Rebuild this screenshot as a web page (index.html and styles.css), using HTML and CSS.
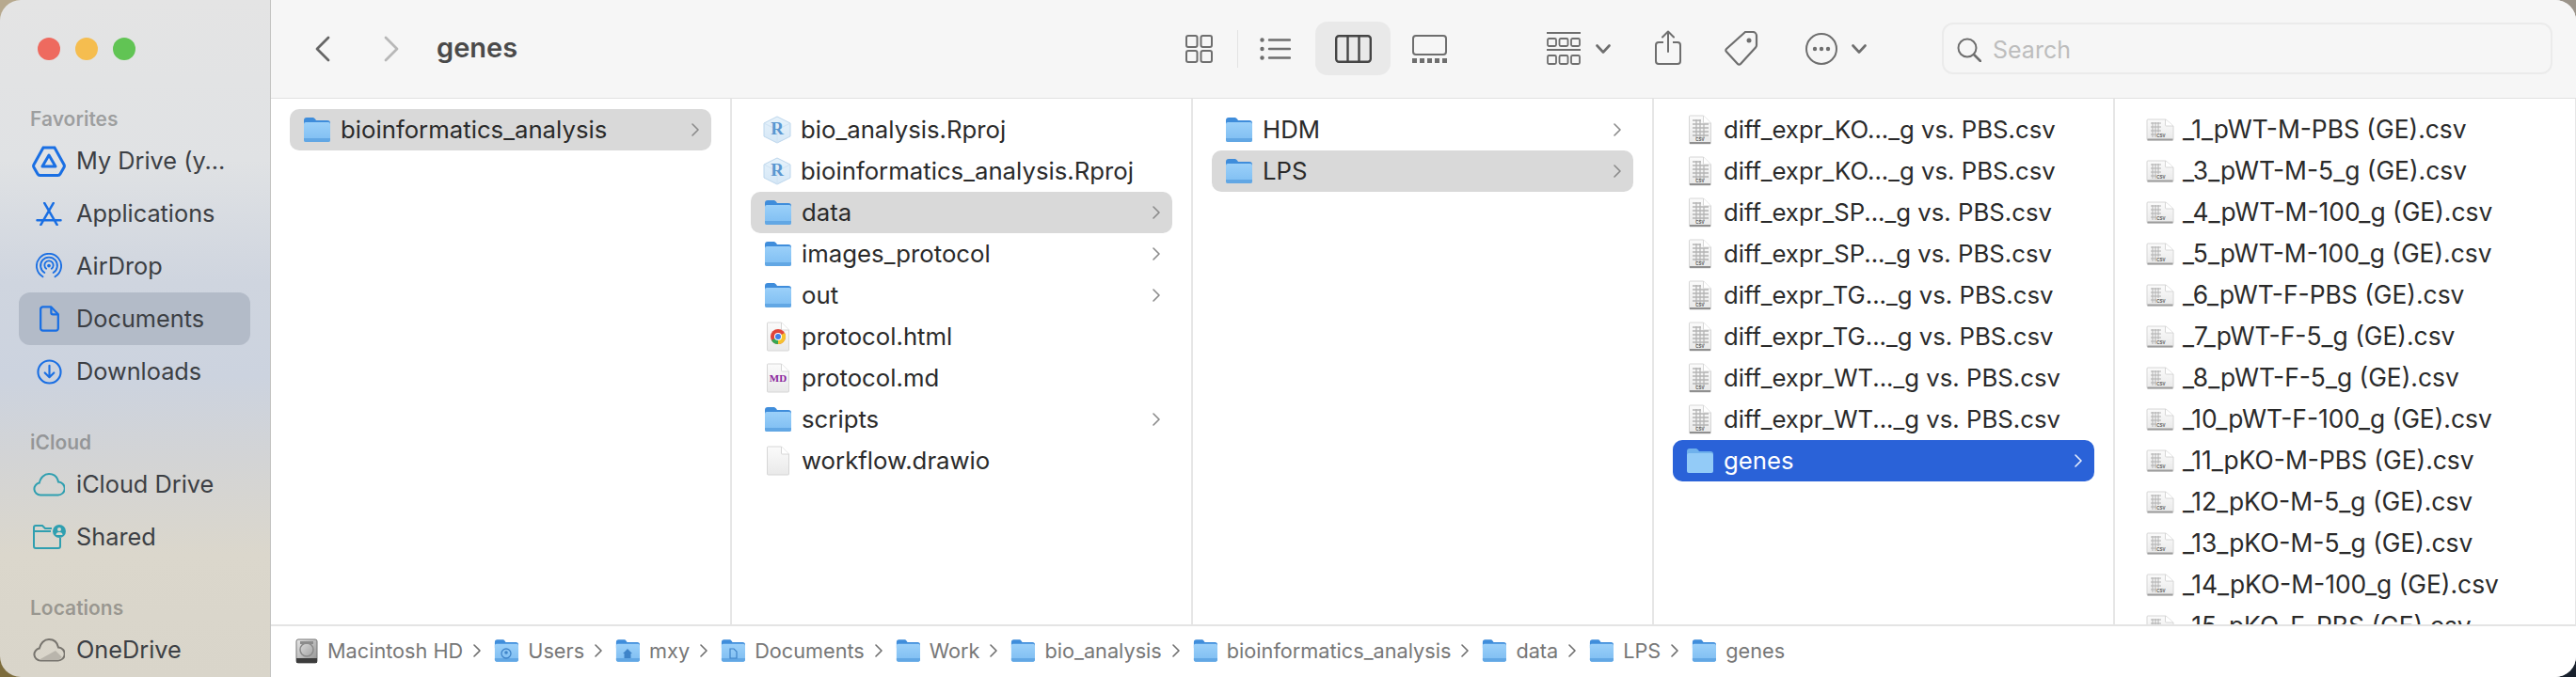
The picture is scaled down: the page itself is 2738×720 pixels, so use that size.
FILE: index.html
```html
<!DOCTYPE html>
<html lang="en">
<head>
<meta charset="utf-8">
<title>genes</title>
<link rel="stylesheet" href="styles.css">
</head>
<body>
<svg class="defs" width="0" height="0" aria-hidden="true">
  <defs>
    <linearGradient id="fg" x1="0" y1="0" x2="0" y2="1"><stop offset="0" stop-color="#9bd0f9"/><stop offset="1" stop-color="#7dbdf2"/></linearGradient>
    <linearGradient id="pg" x1="0" y1="0" x2="0" y2="1"><stop offset="0" stop-color="#fbfbfb"/><stop offset="1" stop-color="#e9e9e9"/></linearGradient>
    <linearGradient id="hd" x1="0" y1="0" x2="1" y2="1"><stop offset="0" stop-color="#e8e8e8"/><stop offset="1" stop-color="#8f8f8f"/></linearGradient>
    <linearGradient id="cube" x1="0" y1="0" x2="0" y2="1"><stop offset="0" stop-color="#e6f2fb"/><stop offset="1" stop-color="#d5e7f6"/></linearGradient>
    <symbol id="folder" viewBox="0 0 29 28">
      <path d="M1 4a3 3 0 0 1 3-3h6c1.5 0 2.2.6 3 1.5L14 4h12a3 3 0 0 1 3 3v4H1z" fill="#3f8ddb"/>
      <rect x="1" y="6" width="28" height="21" rx="2" fill="url(#fg)"/>
      <path d="M1 23h28v2a2 2 0 0 1-2 2H3a2 2 0 0 1-2-2z" fill="#62a7e4"/>
    </symbol>
    <symbol id="folder-sel" viewBox="0 0 29 28">
      <path d="M1 4a3 3 0 0 1 3-3h6c1.5 0 2.2.6 3 1.5L14 4h12a3 3 0 0 1 3 3v4H1z" fill="#6fb1ec"/>
      <rect x="1" y="6" width="28" height="21" rx="2" fill="#93cbf7"/>
    </symbol>
    <symbol id="page" viewBox="0 0 26 32">
      <path d="M1.500 2a1 1 0 0 1 1-1h14l8 8v21a1 1 0 0 1-1 1h-21a1 1 0 0 1-1-1z" fill="url(#pg)" stroke="#d6d6d6"/>
      <path d="M16.500 1v7a1 1 0 0 0 1 1h7" fill="#fff" stroke="#d6d6d6"/>
    </symbol>
    <symbol id="csv" viewBox="0 0 26 32">
      <use href="#page"/>
      <path d="M5 6h9M5 10h17M5 14h17M5 18h17M5 22h17M9 5v20M13 5v20M17 10v15" stroke="#b4b4b4" stroke-width="1.300" fill="none"/>
      <rect x="2" y="29" width="22" height="2" fill="#8f8f8f"/>
      <text x="13" y="28" class="csv-label" text-anchor="middle">CSV</text>
    </symbol>
    <symbol id="csv-wide" viewBox="0 0 30 24" preserveAspectRatio="none">
      <path d="M1 2a1 1 0 0 1 1-1h19l8 7v14a1 1 0 0 1-1 1H2a1 1 0 0 1-1-1z" fill="url(#pg)" stroke="#d6d6d6"/>
      <path d="M20.500 1v6a1 1 0 0 0 1 1h7.500" fill="#fff" stroke="#d6d6d6"/>
      <path d="M5 5h11M5 9h11M5 13h11M5 17h6M7 4v16M10 4v16M13 4v11" stroke="#b0b0b0" stroke-width="1" fill="none"/>
      <rect x="1.500" y="21.500" width="27" height="2" fill="#9c9c9c"/>
      <text x="16" y="19.500" class="csv-label" text-anchor="middle">CSV</text>
    </symbol>
    <symbol id="rproj" viewBox="0 0 30 30">
      <path d="M15 1l14 7v14l-14 7-14-7V8z" fill="url(#cube)" stroke="#bcd6ec"/>
      <path d="M1 8l14 7 14-7M15 15v14" fill="none" stroke="#cfe2f2"/>
      <text x="15" y="20" class="r-label" text-anchor="middle">R</text>
    </symbol>
    <symbol id="chevron" viewBox="0 0 8 14">
      <path d="M1 1l6 6-6 6" fill="none" stroke="currentColor" stroke-width="1.600" stroke-linecap="round" stroke-linejoin="round"/>
    </symbol>
  </defs>
</svg>

<div class="window">
  <aside class="sidebar">
    <div class="lights"><span class="light red"></span><span class="light amber"></span><span class="light green"></span></div>
    <div class="side-title">Favorites</div>
    <div class="side-item">
      <span class="side-icon"><svg class="blue" width="36" height="33" viewBox="0 0 36 33"><path d="M12 2h12l10 18a3 3 0 0 1 0 3l-4 7a3 3 0 0 1-2.500 1.500h-19A3 3 0 0 1 6 30l-4-7a3 3 0 0 1 0-3z" fill="none" stroke="currentColor" stroke-width="3"/><path d="M18 10l7 12H11z" fill="none" stroke="currentColor" stroke-width="3" stroke-linejoin="round"/></svg></span>
      <span class="side-label">My Drive (y...</span>
    </div>
    <div class="side-item">
      <span class="side-icon"><svg class="blue" width="28" height="25" viewBox="0 0 28 26"><path d="M9 1l14 24M19 1L5 25M1 20h26" fill="none" stroke="currentColor" stroke-width="2.600" stroke-linecap="round"/></svg></span>
      <span class="side-label">Applications</span>
    </div>
    <div class="side-item">
      <span class="side-icon"><svg class="blue" width="28" height="28" viewBox="0 0 30 30"><g fill="none" stroke="currentColor" stroke-width="2" stroke-linecap="round"><path d="M8 27a14 14 0 1 1 14 0"/><path d="M10 22.500a9.500 9.500 0 1 1 10 0"/><path d="M12 18a5 5 0 1 1 6 0"/></g><circle cx="15" cy="14.500" r="2" fill="currentColor"/></svg></span>
      <span class="side-label">AirDrop</span>
    </div>
    <div class="side-item active">
      <span class="side-icon"><svg class="blue" width="23" height="28" viewBox="0 0 24 30"><path d="M2 4a2.500 2.500 0 0 1 2.500-2.500H14L22 10v16a2.500 2.500 0 0 1-2.500 2.500h-15A2.500 2.500 0 0 1 2 26z" fill="none" stroke="currentColor" stroke-width="2.400" stroke-linejoin="round"/><path d="M14 2v6a2 2 0 0 0 2 2h6" fill="none" stroke="currentColor" stroke-width="2.400"/></svg></span>
      <span class="side-label">Documents</span>
    </div>
    <div class="side-item">
      <span class="side-icon"><svg class="blue" width="27" height="27" viewBox="0 0 28 28"><circle cx="14" cy="14" r="12.500" fill="none" stroke="currentColor" stroke-width="2.200"/><path d="M14 7v13M9 15l5 5 5-5" fill="none" stroke="currentColor" stroke-width="2.200" stroke-linecap="round" stroke-linejoin="round"/></svg></span>
      <span class="side-label">Downloads</span>
    </div>

    <div class="side-title side-gap">iCloud</div>
    <div class="side-item">
      <span class="side-icon"><svg class="teal" width="34" height="26" viewBox="0 0 34 26"><path d="M8 24.500a6.500 6.500 0 0 1-1.200-12.900C8 6 12 2 17 2c5.500 0 9 3.500 10 8.500a7 7 0 0 1-.5 14z" fill="none" stroke="currentColor" stroke-width="2"/></svg></span>
      <span class="side-label">iCloud Drive</span>
    </div>
    <div class="side-item">
      <span class="side-icon"><svg class="teal" width="36" height="28" viewBox="0 0 36 28"><path d="M2 7V4a2 2 0 0 1 2-2h7l3 3h7M2 8h18M2 7v17a2 2 0 0 0 2 2h24a2 2 0 0 0 2-2v-9" fill="none" stroke="currentColor" stroke-width="2"/><circle cx="29" cy="8" r="7" fill="currentColor"/><circle cx="29" cy="6" r="2" fill="#dcd8cd"/><path d="M25.500 12a3.500 3 0 0 1 7 0z" fill="#dcd8cd"/></svg></span>
      <span class="side-label">Shared</span>
    </div>

    <div class="side-title side-gap">Locations</div>
    <div class="side-item">
      <span class="side-icon"><svg class="gray" width="34" height="26" viewBox="0 0 34 26"><path d="M8 24.500a6.500 6.500 0 0 1-1.200-12.900C8 6 12 2 17 2c5.500 0 9 3.500 10 8.500a7 7 0 0 1-.5 14z" fill="none" stroke="currentColor" stroke-width="2"/><path d="M6 24l18-10 7 7-4 3z" fill="#b9b5ac"/></svg></span>
      <span class="side-label">OneDrive</span>
    </div>
  </aside>

  <div class="main">
    <header class="toolbar">
      <svg class="nav-back" width="16" height="28" viewBox="0 0 16 28"><path d="M14 2L2 14l12 12" fill="none" stroke="#666" stroke-width="2.800" stroke-linecap="round" stroke-linejoin="round"/></svg>
      <svg class="nav-fwd" width="16" height="28" viewBox="0 0 16 28"><path d="M2 2l12 12L2 26" fill="none" stroke="#b8b8b8" stroke-width="2.800" stroke-linecap="round" stroke-linejoin="round"/></svg>
      <div class="title">genes</div>

      <svg class="tool t-grid" width="29" height="30" viewBox="0 0 29 30"><g fill="none" stroke="#6e6e6e" stroke-width="2"><rect x="1" y="1" width="11.500" height="12" rx="2"/><rect x="16.500" y="1" width="11.500" height="12" rx="2"/><rect x="1" y="17" width="11.500" height="12" rx="2"/><rect x="16.500" y="17" width="11.500" height="12" rx="2"/></g></svg>
      <span class="tool-sep"></span>
      <svg class="tool t-list" width="33" height="24" viewBox="0 0 33 24"><g fill="#6e6e6e"><circle cx="2.500" cy="2.500" r="2.200"/><circle cx="2.500" cy="12" r="2.200"/><circle cx="2.500" cy="21.500" r="2.200"/></g><path d="M10 2.500h22M10 12h22M10 21.500h22" stroke="#6e6e6e" stroke-width="2.400" stroke-linecap="round"/></svg>
      <span class="view-active"><svg width="39" height="30" viewBox="0 0 39 30"><g fill="none" stroke="#454545" stroke-width="2.400"><rect x="1.200" y="1.200" width="36.600" height="27.600" rx="3"/><path d="M13.500 1v28M25.500 1v28"/></g></svg></span>
      <svg class="tool t-gallery" width="37" height="30" viewBox="0 0 37 30"><rect x="1" y="1" width="35" height="20" rx="3" fill="none" stroke="#6e6e6e" stroke-width="2"/><g fill="#6e6e6e"><rect x="0" y="25" width="5" height="5"/><rect x="8" y="25" width="5" height="5"/><rect x="16" y="25" width="5" height="5"/><rect x="24" y="25" width="5" height="5"/><rect x="32" y="25" width="5" height="5"/></g></svg>
      <svg class="tool t-group" width="36" height="35" viewBox="0 0 36 35"><path d="M0 1h36M0 19h36" stroke="#6e6e6e" stroke-width="2"/><g fill="none" stroke="#6e6e6e" stroke-width="1.800"><rect x="1" y="7" width="9" height="8" rx="1.500"/><rect x="13.500" y="7" width="9" height="8" rx="1.500"/><rect x="26" y="7" width="9" height="8" rx="1.500"/><rect x="1" y="25" width="9" height="9" rx="1.500"/><rect x="13.500" y="25" width="9" height="9" rx="1.500"/><rect x="26" y="25" width="9" height="9" rx="1.500"/></g></svg>
      <svg class="tool t-caret" width="16" height="10" viewBox="0 0 16 10"><path d="M1.500 1.500L8 8.500l6.500-7" fill="none" stroke="#6e6e6e" stroke-width="2.600" stroke-linecap="round" stroke-linejoin="round"/></svg>
      <svg class="tool t-share" width="28" height="37" viewBox="0 0 28 37"><path d="M9 13H4a3 3 0 0 0-3 3v17a3 3 0 0 0 3 3h20a3 3 0 0 0 3-3V16a3 3 0 0 0-3-3h-5" fill="none" stroke="#6e6e6e" stroke-width="2"/><path d="M14 23V2M8 7.500L14 1.500l6 6" fill="none" stroke="#6e6e6e" stroke-width="2" stroke-linecap="round" stroke-linejoin="round"/></svg>
      <svg class="tool t-tag" width="36" height="37" viewBox="0 0 36 37"><path d="M22 1h8a4 4 0 0 1 4 4v10a4 4 0 0 1-1 2.500L17 35a2 2 0 0 1-3 0L2 22a2 2 0 0 1 0-3z" fill="none" stroke="#6e6e6e" stroke-width="2.200" stroke-linejoin="round"/><circle cx="26" cy="10" r="2.500" fill="#6e6e6e"/></svg>
      <svg class="tool t-more" width="34" height="34" viewBox="0 0 34 34"><circle cx="17" cy="17" r="16" fill="none" stroke="#6e6e6e" stroke-width="2"/><g fill="#6e6e6e"><circle cx="10" cy="17" r="2.200"/><circle cx="17" cy="17" r="2.200"/><circle cx="24" cy="17" r="2.200"/></g></svg>
      <svg class="tool t-caret2" width="16" height="10" viewBox="0 0 16 10"><path d="M1.500 1.500L8 8.500l6.500-7" fill="none" stroke="#6e6e6e" stroke-width="2.600" stroke-linecap="round" stroke-linejoin="round"/></svg>

      <div class="search">
        <svg width="26" height="26" viewBox="0 0 26 26"><circle cx="11" cy="11" r="9.500" fill="none" stroke="#6e6e6e" stroke-width="2"/><path d="M18 18l7 7" stroke="#6e6e6e" stroke-width="2.600" stroke-linecap="round"/></svg>
        <span class="search-text">Search</span>
      </div>
    </header>

    <div class="columns">
      <section class="col">
        <div class="row selected"><svg class="icon-folder"><use href="#folder"/></svg><span class="name">bioinformatics_analysis</span><svg class="chev"><use href="#chevron"/></svg></div>
      </section>

      <section class="col">
        <div class="row"><svg class="icon-rproj"><use href="#rproj"/></svg><span class="name">bio_analysis.Rproj</span></div>
        <div class="row"><svg class="icon-rproj"><use href="#rproj"/></svg><span class="name">bioinformatics_analysis.Rproj</span></div>
        <div class="row selected"><svg class="icon-folder"><use href="#folder"/></svg><span class="name">data</span><svg class="chev"><use href="#chevron"/></svg></div>
        <div class="row"><svg class="icon-folder"><use href="#folder"/></svg><span class="name">images_protocol</span><svg class="chev"><use href="#chevron"/></svg></div>
        <div class="row"><svg class="icon-folder"><use href="#folder"/></svg><span class="name">out</span><svg class="chev"><use href="#chevron"/></svg></div>
        <div class="row"><svg class="icon-file" viewBox="0 0 26 32"><use href="#page"/><circle cx="13" cy="16" r="8" fill="#e0453a"/><path d="M13 16L6 20a8 8 0 0 0 7 4z" fill="#34a853"/><path d="M13 16v8a8 8 0 0 0 7-12z" fill="#f6c22e"/><circle cx="13" cy="16" r="4" fill="#fff"/><circle cx="13" cy="16" r="3" fill="#3f7fe8"/></svg><span class="name">protocol.html</span></div>
        <div class="row"><svg class="icon-file" viewBox="0 0 26 32"><use href="#page"/><text x="13" y="20" class="md-label" text-anchor="middle">MD</text></svg><span class="name">protocol.md</span></div>
        <div class="row"><svg class="icon-folder"><use href="#folder"/></svg><span class="name">scripts</span><svg class="chev"><use href="#chevron"/></svg></div>
        <div class="row"><svg class="icon-file"><use href="#page"/></svg><span class="name">workflow.drawio</span></div>
      </section>

      <section class="col">
        <div class="row"><svg class="icon-folder"><use href="#folder"/></svg><span class="name">HDM</span><svg class="chev"><use href="#chevron"/></svg></div>
        <div class="row selected"><svg class="icon-folder"><use href="#folder"/></svg><span class="name">LPS</span><svg class="chev"><use href="#chevron"/></svg></div>
      </section>

      <section class="col">
        <div class="row"><svg class="icon-file"><use href="#csv"/></svg><span class="name">diff_expr_KO..._g vs. PBS.csv</span></div>
        <div class="row"><svg class="icon-file"><use href="#csv"/></svg><span class="name">diff_expr_KO..._g vs. PBS.csv</span></div>
        <div class="row"><svg class="icon-file"><use href="#csv"/></svg><span class="name">diff_expr_SP..._g vs. PBS.csv</span></div>
        <div class="row"><svg class="icon-file"><use href="#csv"/></svg><span class="name">diff_expr_SP..._g vs. PBS.csv</span></div>
        <div class="row"><svg class="icon-file"><use href="#csv"/></svg><span class="name">diff_expr_TG..._g vs. PBS.csv</span></div>
        <div class="row"><svg class="icon-file"><use href="#csv"/></svg><span class="name">diff_expr_TG..._g vs. PBS.csv</span></div>
        <div class="row"><svg class="icon-file"><use href="#csv"/></svg><span class="name">diff_expr_WT..._g vs. PBS.csv</span></div>
        <div class="row"><svg class="icon-file"><use href="#csv"/></svg><span class="name">diff_expr_WT..._g vs. PBS.csv</span></div>
        <div class="row focused"><svg class="icon-folder"><use href="#folder-sel"/></svg><span class="name">genes</span><svg class="chev"><use href="#chevron"/></svg></div>
      </section>

      <section class="col col-last">
        <div class="row"><svg class="icon-wide"><use href="#csv-wide"/></svg><span class="name name-wide">_1_pWT-M-PBS (GE).csv</span></div>
        <div class="row"><svg class="icon-wide"><use href="#csv-wide"/></svg><span class="name name-wide">_3_pWT-M-5_g (GE).csv</span></div>
        <div class="row"><svg class="icon-wide"><use href="#csv-wide"/></svg><span class="name name-wide">_4_pWT-M-100_g (GE).csv</span></div>
        <div class="row"><svg class="icon-wide"><use href="#csv-wide"/></svg><span class="name name-wide">_5_pWT-M-100_g (GE).csv</span></div>
        <div class="row"><svg class="icon-wide"><use href="#csv-wide"/></svg><span class="name name-wide">_6_pWT-F-PBS (GE).csv</span></div>
        <div class="row"><svg class="icon-wide"><use href="#csv-wide"/></svg><span class="name name-wide">_7_pWT-F-5_g (GE).csv</span></div>
        <div class="row"><svg class="icon-wide"><use href="#csv-wide"/></svg><span class="name name-wide">_8_pWT-F-5_g (GE).csv</span></div>
        <div class="row"><svg class="icon-wide"><use href="#csv-wide"/></svg><span class="name name-wide">_10_pWT-F-100_g (GE).csv</span></div>
        <div class="row"><svg class="icon-wide"><use href="#csv-wide"/></svg><span class="name name-wide">_11_pKO-M-PBS (GE).csv</span></div>
        <div class="row"><svg class="icon-wide"><use href="#csv-wide"/></svg><span class="name name-wide">_12_pKO-M-5_g (GE).csv</span></div>
        <div class="row"><svg class="icon-wide"><use href="#csv-wide"/></svg><span class="name name-wide">_13_pKO-M-5_g (GE).csv</span></div>
        <div class="row"><svg class="icon-wide"><use href="#csv-wide"/></svg><span class="name name-wide">_14_pKO-M-100_g (GE).csv</span></div>
        <div class="row"><svg class="icon-wide"><use href="#csv-wide"/></svg><span class="name name-wide">_15_pKO-F-PBS (GE).csv</span></div>
      </section>
    </div>

    <footer class="pathbar">
      <svg class="crumb-disk" width="24" height="27" viewBox="0 0 24 27"><rect x="1" y="1" width="22" height="25" rx="2" fill="url(#hd)" stroke="#777"/><circle cx="12" cy="12" r="7" fill="none" stroke="#8a8a8a" stroke-width="1.500"/><rect x="5" y="3" width="14" height="3" fill="#8c8c8c"/><rect x="1" y="21" width="22" height="5" fill="#3c3c3c"/></svg>
      <span class="crumb">Macintosh HD</span><svg class="sep"><use href="#chevron"/></svg>
      <span class="crumb-folder"><svg class="crumb-icon"><use href="#folder"/></svg><svg class="crumb-glyph" viewBox="0 0 12 12"><circle cx="6" cy="6" r="5" fill="none" stroke="#3f84c9" stroke-width="1.300"/><circle cx="6" cy="5" r="1.800" fill="#3f84c9"/></svg></span>
      <span class="crumb">Users</span><svg class="sep"><use href="#chevron"/></svg>
      <span class="crumb-folder"><svg class="crumb-icon"><use href="#folder"/></svg><svg class="crumb-glyph" viewBox="0 0 12 12"><path d="M6 1L1 6h1.500v5h7V6H11z" fill="#3f84c9"/></svg></span>
      <span class="crumb">mxy</span><svg class="sep"><use href="#chevron"/></svg>
      <span class="crumb-folder"><svg class="crumb-icon"><use href="#folder"/></svg><svg class="crumb-glyph" viewBox="0 0 12 12"><path d="M3 1h4l3 3v7H3z" fill="none" stroke="#3f84c9" stroke-width="1.200"/></svg></span>
      <span class="crumb">Documents</span><svg class="sep"><use href="#chevron"/></svg>
      <svg class="crumb-icon"><use href="#folder"/></svg>
      <span class="crumb">Work</span><svg class="sep"><use href="#chevron"/></svg>
      <svg class="crumb-icon"><use href="#folder"/></svg>
      <span class="crumb">bio_analysis</span><svg class="sep"><use href="#chevron"/></svg>
      <svg class="crumb-icon"><use href="#folder"/></svg>
      <span class="crumb">bioinformatics_analysis</span><svg class="sep"><use href="#chevron"/></svg>
      <svg class="crumb-icon"><use href="#folder"/></svg>
      <span class="crumb">data</span><svg class="sep"><use href="#chevron"/></svg>
      <svg class="crumb-icon"><use href="#folder"/></svg>
      <span class="crumb">LPS</span><svg class="sep"><use href="#chevron"/></svg>
      <svg class="crumb-icon"><use href="#folder"/></svg>
      <span class="crumb">genes</span>
    </footer>
  </div>
</div>
</body>
</html>
```

FILE: styles.css
```css
* { box-sizing: border-box; }

html, body {
  margin: 0;
  height: 720px;
  overflow: hidden;
}

body {
  font-family: Inter, "Noto Sans", "Liberation Sans", sans-serif;
  background:
    linear-gradient(to right, #7d6c3c 50%, #18202c 50%) bottom / 100% 50% no-repeat,
    linear-gradient(to right, #b7a98e 50%, #9b948a 50%) top / 100% 50% no-repeat;
}

.defs { position: absolute; }

.csv-label { font: 700 4.5px "Liberation Sans", sans-serif; fill: #555; }
.r-label { font: 700 19px "Liberation Serif", serif; fill: #5a97d0; }
.md-label { font: 700 11px "Liberation Serif", serif; fill: #8a1f9c; }

.window {
  display: flex;
  width: 2738px;
  height: 720px;
  border-radius: 22px;
  overflow: hidden;
}

/* Sidebar */
.sidebar {
  flex: 0 0 288px;
  padding-top: 40px;
  border-right: 1px solid #c4c4c2;
  color: #3c3f44;
  font-size: 25.300px;
  background: linear-gradient(to bottom, #e4e4e4 0, #e0e2e4 170px, #cfd5df 300px, #ccd3df 400px, #d3d4d5 490px, #dbd7cc 590px, #d9d5ca 720px);
}

.lights { display: flex; gap: 16px; padding-left: 40px; height: 69px; }
.light { width: 24px; height: 24px; border-radius: 50%; }
.red { background: #ee6a5f; }
.amber { background: #f5bd4f; }
.green { background: #61c454; }

.side-title {
  display: flex;
  align-items: center;
  height: 34px;
  padding-left: 32px;
  font-size: 21px;
  font-weight: 600;
  color: rgba(60, 60, 60, .42);
}
.side-gap { margin-top: 30px; }

.side-item {
  display: flex;
  align-items: center;
  gap: 11px;
  height: 56px;
  margin: 0 21px 0 20px;
  padding-left: 14px;
  border-radius: 12px;
}
.side-item.active { background: #b3bbc8; }
.side-label { padding-bottom: 2px; }
.side-icon { display: flex; align-items: center; justify-content: center; flex: 0 0 36px; }
.blue { color: #1a6fe3; }
.teal { color: #2f9fb0; }
.gray { color: #77746e; }

/* Main area */
.main {
  flex: 1;
  display: flex;
  flex-direction: column;
  min-width: 0;
  background: #fff;
}

.toolbar {
  flex: 0 0 105px;
  display: flex;
  align-items: center;
  padding: 0 25px 1px 47px;
  background: #f6f6f6;
  border-bottom: 1px solid #e2e2e2;
}
.nav-fwd { margin-left: 57px; }
.title {
  margin-left: 40px;
  flex: 1;
  padding-bottom: 2px;
  font-size: 29px;
  font-weight: 600;
  color: #4a4a4a;
}
.t-grid { flex: none; }
.tool-sep { flex: none; width: 1px; height: 40px; margin-left: 26px; background: #e3e3e3; }
.t-list { flex: none; margin-left: 23px; }
.view-active {
  flex: none;
  display: flex;
  align-items: center;
  justify-content: center;
  width: 80px;
  height: 57px;
  margin-left: 26px;
  border-radius: 13px;
  background: #e9e9e9;
}
.t-gallery { flex: none; margin-left: 23px; }
.t-group { flex: none; margin-left: 106px; }
.t-caret { flex: none; margin-left: 16px; }
.t-share { flex: none; margin-left: 47px; margin-top: -2px; }
.t-tag { flex: none; margin-left: 46px; }
.t-more { flex: none; margin-left: 50px; }
.t-caret2 { flex: none; margin-left: 15px; }

.search {
  flex: none;
  display: flex;
  align-items: center;
  gap: 12px;
  width: 649px;
  height: 55px;
  margin-left: 80px;
  padding: 2px 0 0 14px;
  border: 2px solid #ebebeb;
  border-radius: 12px;
}
.search-text { font-size: 25px; color: #bdbdbd; }

/* Columns */
.columns {
  flex: 1;
  display: flex;
  min-height: 0;
  overflow: hidden;
}
.col {
  flex: 0 0 490px;
  padding: 11px 20px 0 20px;
  border-right: 2px solid #e6e6e6;
}
.col-last {
  flex: 1;
  border-right: 1px solid #e6e6e6;
}

.row {
  display: flex;
  align-items: center;
  height: 44px;
  padding: 0 13px 0 14px;
  border-radius: 10px;
  color: #2a2a2a;
  font-size: 25.750px;
}
.row.selected { background: #d9d9d9; }
.row.focused { background: #2a62d8; color: #fff; }

.icon-folder, .icon-rproj, .icon-file, .icon-wide { flex: none; }
.icon-folder { width: 29px; height: 28px; }
.icon-rproj { width: 30px; height: 30px; margin-left: -1px; margin-right: -1px; }
.icon-file { width: 26px; height: 32px; margin: 0 1px 0 2px; }
.icon-wide { width: 30px; height: 24px; margin-left: -1px; }

.name { margin-left: 11px; padding-bottom: 2px; white-space: nowrap; }
.name-wide { margin-left: 9px; font-size: 26.400px; }

.chev { flex: none; width: 8px; height: 14px; margin-left: auto; color: #8a8a8a; }
.row.focused .chev { color: #e8eefc; }

/* Path bar */
.pathbar {
  flex: 0 0 56px;
  display: flex;
  align-items: center;
  padding: 0 0 2px 26px;
  border-top: 2px solid #e4e4e4;
  background: #fff;
  color: #777;
  font-size: 21.700px;
}
.crumb { margin-left: 10px; white-space: nowrap; }
.sep { flex: none; width: 8px; height: 14px; margin: 0 14px 0 11px; color: #6f6f6f; }
.crumb-icon { flex: none; width: 26px; height: 26px; display: block; }
.crumb-folder { position: relative; flex: none; width: 26px; height: 26px; }
.crumb-glyph { position: absolute; left: 7px; top: 10px; width: 12px; height: 12px; }
.crumb-disk { flex: none; }
```
